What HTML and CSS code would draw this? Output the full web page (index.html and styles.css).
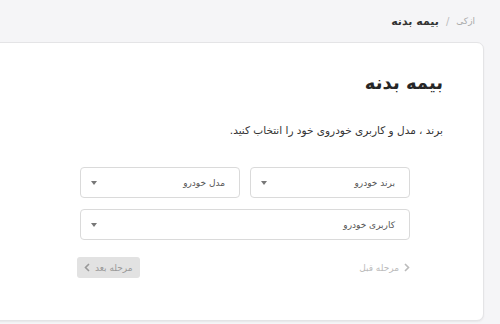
FILE: index.html
```html
<!DOCTYPE html>
<html lang="fa" dir="rtl">
  <head>
    <meta charset="UTF-8" />
    <meta name="viewport" content="width=device-width, initial-scale=1.0" />
    <title>بیمه بدنه</title>
    <link rel="stylesheet" href="styles.css">
  </head>
  <body>
    <nav class="crumbs">
      <span class="crumb-home">ازکی</span>
      <span class="crumb-sep">/</span>
      <span class="crumb-current">بیمه بدنه</span>
    </nav>

    <div class="card">
      <h1 class="title">بیمه بدنه</h1>
      <p class="lead">برند ، مدل و کاربری خودروی خود را انتخاب کنید.</p>

      <div class="form">
        <div class="row">
          <div class="select"><span>برند خودرو</span><i class="caret"></i></div>
          <div class="select"><span>مدل خودرو</span><i class="caret"></i></div>
        </div>
        <div class="row">
          <div class="select"><span>کاربری خودرو</span><i class="caret"></i></div>
        </div>

        <div class="actions">
          <a class="prev">
            <svg width="7" height="9" viewBox="0 0 7 9"><path d="M2 1l3.5 3.5L2 8" fill="none" stroke="#bbb" stroke-width="1.6"/></svg>
            مرحله قبل
          </a>
          <button class="next" disabled>
            مرحله بعد
            <svg width="7" height="9" viewBox="0 0 7 9"><path d="M5 1L1.5 4.5 5 8" fill="none" stroke="#999" stroke-width="1.6"/></svg>
          </button>
        </div>
      </div>
    </div>
  </body>
</html>
```

FILE: styles.css
```css
body {
  margin: 0;
  height: 324px;
  overflow: hidden;
  background-color: #f5f5f7;
  font-family: "DejaVu Sans", sans-serif;
  color: #333;
}

.crumbs {
  height: 42px;
  display: flex;
  align-items: center;
  gap: 7px;
  padding-right: 25px;
  font-size: 10px;
}

.crumb-home {
  color: #aaa;
  font-size: 9px;
}

.crumb-sep {
  color: #bbb;
}

.crumb-current {
  color: #333;
  font-weight: bold;
  font-size: 11px;
}

.card {
  width: 504px;
  height: 279px;
  margin-right: 16px;
  box-sizing: border-box;
  background-color: #fff;
  border: 1px solid #e4e4e6;
  border-radius: 7px;
  box-shadow: 0 1px 2px rgba(0, 0, 0, 0.06);
  padding: 28px 0 0 0;
}

.title {
  margin: 0 40px 0 0;
  font-size: 18px;
  font-weight: bold;
  color: #262626;
  line-height: 24px;
}

.lead {
  margin: 27px 40px 0 0;
  font-size: 10.5px;
  color: #333;
  line-height: 16px;
}

.form {
  width: 330px;
  margin: 29px 73px 0 0;
}

.row {
  display: flex;
  gap: 10px;
  margin-bottom: 11px;
}

.select {
  flex: 1;
  height: 31px;
  box-sizing: border-box;
  border: 1px solid #dadada;
  border-radius: 4px;
  display: flex;
  align-items: center;
  justify-content: space-between;
  padding: 0 14px 0 10px;
  font-size: 9px;
  color: #555;
}

.caret {
  width: 0;
  height: 0;
  border-left: 3.5px solid transparent;
  border-right: 3.5px solid transparent;
  border-top: 4px solid #777;
}

.actions {
  display: flex;
  justify-content: space-between;
  align-items: center;
  margin-top: 17px;
}

.prev {
  display: flex;
  align-items: center;
  gap: 4px;
  font-size: 9px;
  color: #bbb;
}

.next {
  display: flex;
  align-items: center;
  gap: 4px;
  height: 21px;
  padding: 0 7px;
  margin-left: -3px;
  border: none;
  border-radius: 3px;
  background-color: #e2e2e2;
  color: #999;
  font-family: inherit;
  font-size: 9px;
}
```
